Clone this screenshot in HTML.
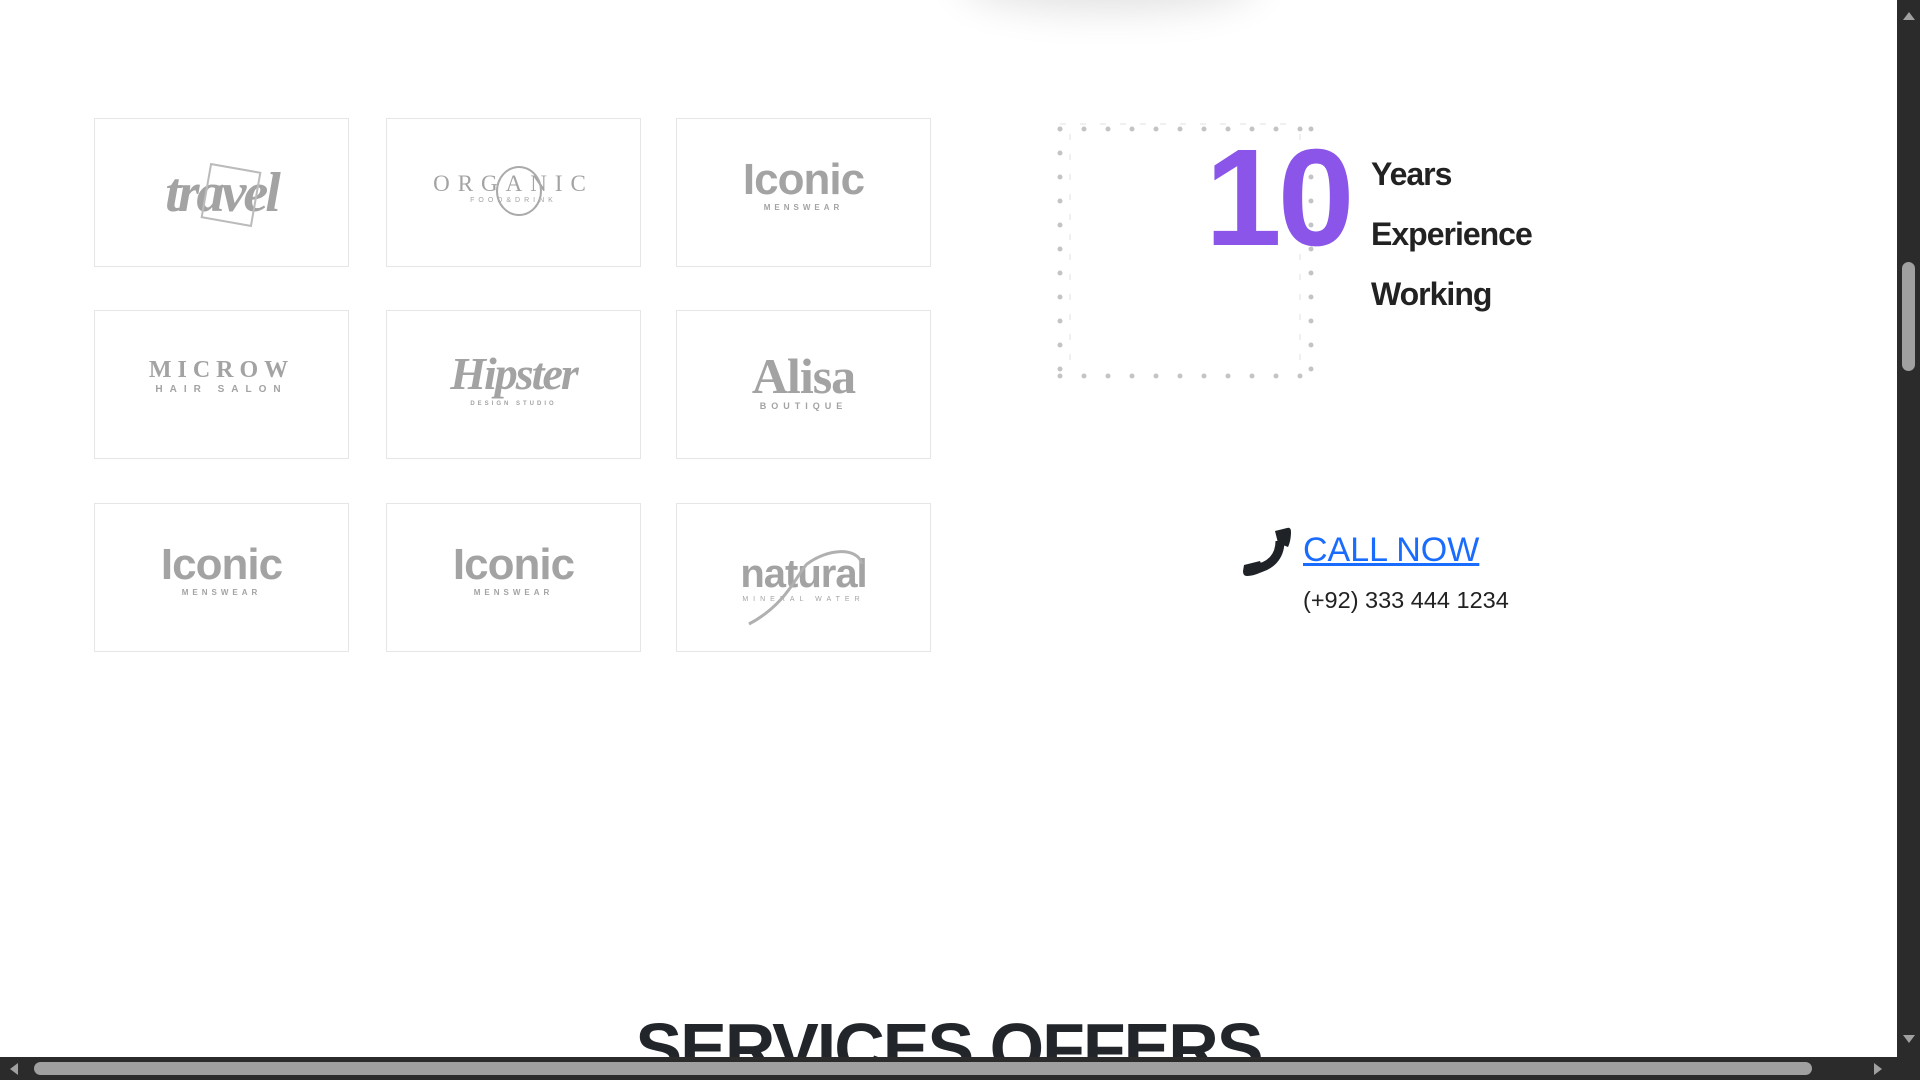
<!DOCTYPE html>
<html><head><meta charset="utf-8">
<style>
html,body{margin:0;padding:0;width:1920px;height:1080px;overflow:hidden;background:#fff;font-family:"Liberation Sans",sans-serif;}
.box{position:absolute;width:253px;height:147px;border:1px solid #e6e6e6;background:#fff;}
.logo{position:absolute;left:0;right:0;text-align:center;color:#a3a3a3;}
.shadow{position:absolute;left:960px;top:-60px;width:300px;height:60px;border-radius:50%;box-shadow:0 10px 40px rgba(0,0,0,0.12);}
.vs{position:absolute;left:1897px;top:0;width:23px;height:1080px;background:#2b2b2b;}
.hs{position:absolute;left:0;top:1057px;width:1920px;height:23px;background:#2b2b2b;}
</style></head><body>
<div class="shadow"></div>

<div class="box" style="left:94px;top:118px">
  <div class="logo" style="top:42px;font-family:'Liberation Serif',serif;font-style:italic;font-size:56px;font-weight:bold;letter-spacing:-3px">travel</div>
  <div style="position:absolute;left:110px;top:48px;width:48px;height:52px;border:2px solid #bbb;transform:rotate(10deg)"></div>
</div>
<div class="box" style="left:386px;top:118px">
  <div class="logo" style="top:52px;font-family:'Liberation Serif',serif;font-size:23px;letter-spacing:8px">ORGANIC</div>
  <div class="logo" style="top:78px;font-size:7px;letter-spacing:4px">FOOD&amp;DRINK</div>
  <div style="position:absolute;left:109px;top:47px;width:42px;height:46px;border:2px solid #aaa;border-radius:50%"></div>
</div>
<div class="box" style="left:676px;top:118px">
  <div class="logo" style="top:36px;font-size:44px;font-weight:bold;letter-spacing:-1px">Iconic</div>
  <div class="logo" style="top:84px;font-size:8px;font-weight:bold;letter-spacing:4px">MENSWEAR</div>
</div>

<div class="box" style="left:94px;top:310px">
  <div class="logo" style="top:46px;font-family:'Liberation Serif',serif;font-size:24px;font-weight:bold;letter-spacing:6px">MICROW</div>
  <div class="logo" style="top:73px;font-size:10px;font-weight:bold;letter-spacing:7px">HAIR SALON</div>
</div>
<div class="box" style="left:386px;top:310px">
  <div class="logo" style="top:36px;font-family:'Liberation Serif',serif;font-style:italic;font-size:46px;font-weight:bold;letter-spacing:-2px">Hipster</div>
  <div class="logo" style="top:90px;font-size:6px;font-weight:bold;letter-spacing:3px">DESIGN STUDIO</div>
</div>
<div class="box" style="left:676px;top:310px">
  <div class="logo" style="top:36px;font-family:'Liberation Serif',serif;font-size:50px;font-weight:bold;letter-spacing:-1px">Alisa</div>
  <div class="logo" style="top:90px;font-size:9px;font-weight:bold;letter-spacing:5px">BOUTIQUE</div>
</div>

<div class="box" style="left:94px;top:503px">
  <div class="logo" style="top:36px;font-size:44px;font-weight:bold;letter-spacing:-1px">Iconic</div>
  <div class="logo" style="top:84px;font-size:8px;font-weight:bold;letter-spacing:4px">MENSWEAR</div>
</div>
<div class="box" style="left:386px;top:503px">
  <div class="logo" style="top:36px;font-size:44px;font-weight:bold;letter-spacing:-1px">Iconic</div>
  <div class="logo" style="top:84px;font-size:8px;font-weight:bold;letter-spacing:4px">MENSWEAR</div>
</div>
<div class="box" style="left:676px;top:503px">
  <div class="logo" style="top:48px;font-size:40px;font-weight:bold;letter-spacing:-1px">natural</div>
  <div class="logo" style="top:92px;font-size:7px;letter-spacing:5px">MINERAL WATER</div>
  <svg style="position:absolute;left:60px;top:40px" width="140" height="90"><path d="M12,80 C50,60 60,30 70,20 C90,5 120,2 125,20" fill="none" stroke="#b0b0b0" stroke-width="3"/></svg>
</div>

<svg style="position:absolute;left:1055px;top:122px" width="264" height="262">
  <g fill="none" stroke="#c4c4c4" stroke-width="5" stroke-linecap="round" stroke-dasharray="0 24">
    <path d="M5,7 H258"/><path d="M5,254 H258"/>
    <path d="M5,7 V254"/><path d="M256,7 V254"/>
  </g>
  <g fill="none" stroke="#e0e0e0" stroke-width="1" stroke-dasharray="6 14">
    <path d="M5,2 H245"/><path d="M15,12 V250"/><path d="M245,12 V250"/>
  </g>
</svg>
<div style="position:absolute;left:1205px;top:118px;font-size:138px;font-weight:bold;color:#8a55e8;line-height:160px;letter-spacing:-4px">10</div>
<div style="position:absolute;left:1371px;top:144px;font-size:32px;font-weight:bold;color:#222;line-height:60px;letter-spacing:-1px">Years<br>Experience<br>Working</div>

<svg style="position:absolute;left:1242px;top:527px" width="50" height="50" viewBox="0 0 50 50">
  <path d="M38,14 C38,30 28,40 12,42" fill="none" stroke="#1f2327" stroke-width="9"/>
  <path d="M33,4 L45,1 C48,0 49,2 49,5 C49,10 48,16 46,20 L36,16 Z" fill="#1f2327"/>
  <path d="M2,38 L18,34 L22,44 C16,47 10,49 5,49 C2,49 1,47 1,44 Z" fill="#1f2327"/>
</svg>
<div style="position:absolute;left:1303px;top:528px;font-size:34px;line-height:44px;color:#1a6cff;text-decoration:underline">CALL NOW</div>
<div style="position:absolute;left:1303px;top:586px;font-size:23.5px;line-height:28px;color:#222">(+92) 333 444 1234</div>

<div style="position:absolute;left:0;width:1897px;top:1008px;text-align:center;font-size:70px;font-weight:bold;color:#22262a;letter-spacing:-2px;line-height:80px">SERVICES OFFERS</div>

<div class="vs">
  <div style="position:absolute;left:6px;top:12px;width:0;height:0;border-left:6px solid transparent;border-right:6px solid transparent;border-bottom:8px solid #a0a0a0"></div>
  <div style="position:absolute;left:5px;top:262px;width:13px;height:109px;border-radius:7px;background:#a0a0a0"></div>
  <div style="position:absolute;left:6px;top:1035px;width:0;height:0;border-left:6px solid transparent;border-right:6px solid transparent;border-top:8px solid #a0a0a0"></div>
</div>
<div class="hs">
  <div style="position:absolute;left:10px;top:6px;width:0;height:0;border-top:6px solid transparent;border-bottom:6px solid transparent;border-right:8px solid #a0a0a0"></div>
  <div style="position:absolute;left:34px;top:5px;width:1778px;height:13px;border-radius:7px;background:#a0a0a0"></div>
  <div style="position:absolute;left:1874px;top:6px;width:0;height:0;border-top:6px solid transparent;border-bottom:6px solid transparent;border-left:8px solid #a0a0a0"></div>
</div>
</body></html>
